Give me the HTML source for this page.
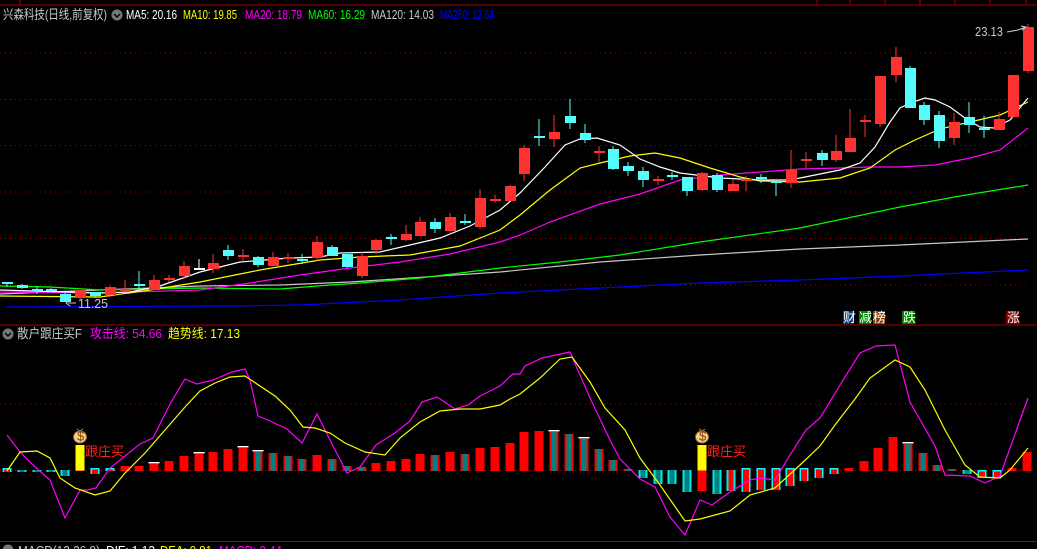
<!DOCTYPE html><html><head><meta charset="utf-8"><style>
html,body{margin:0;padding:0;background:#000;width:1037px;height:549px;overflow:hidden}
svg{display:block}
text{font-family:"Liberation Sans","Noto Sans CJK SC",sans-serif;font-size:13px}
</style></head><body>
<svg id="s" width="1037" height="549" xmlns="http://www.w3.org/2000/svg">
<rect width="1037" height="549" fill="#000"/>
<line x1="0" y1="5" x2="1037" y2="5" stroke="#a00" stroke-width="1"/>
<g stroke="#a00"><line x1="20" y1="0" x2="20" y2="5"/><line x1="817" y1="0" x2="817" y2="5"/><line x1="850" y1="0" x2="850" y2="5"/><line x1="885" y1="0" x2="885" y2="5"/><line x1="920" y1="0" x2="920" y2="5"/><line x1="955" y1="0" x2="955" y2="5"/><line x1="990" y1="0" x2="990" y2="5"/><line x1="1026" y1="0" x2="1026" y2="5"/></g>
<g stroke="#a00" stroke-dasharray="1,4" stroke-width="1">
<line x1="0" y1="53" x2="1030" y2="53"/><line x1="0" y1="99.5" x2="1030" y2="99.5"/><line x1="0" y1="145.5" x2="1030" y2="145.5"/><line x1="0" y1="192" x2="1030" y2="192"/><line x1="0" y1="238.5" x2="1030" y2="238.5"/><line x1="0" y1="285" x2="1030" y2="285"/>
<line x1="0" y1="404" x2="1030" y2="404"/><line x1="0" y1="470.5" x2="1030" y2="470.5"/>
</g>
<line x1="0" y1="325" x2="1037" y2="325" stroke="#a00"/>
<line x1="0" y1="541.5" x2="1037" y2="541.5" stroke="#a00"/>
<g id="ma" fill="none" stroke-width="1.2"></g>
<g id="cd"></g>
<g id="hist"></g>
<g id="ind" fill="none" stroke-width="1.2"></g>
<text x="3" y="19" fill="#c8c8c8" font-size="14" textLength="104" lengthAdjust="spacingAndGlyphs">兴森科技(日线,前复权)</text>
<circle cx="117" cy="15" r="5.5" fill="#777"/><path d="M114 14l3 3 3-3" stroke="#000" fill="none" stroke-width="1.4"/>
<text x="126" y="19" fill="#fff" textLength="51" lengthAdjust="spacingAndGlyphs">MA5: 20.16</text>
<text x="183" y="19" fill="#ff0" textLength="54" lengthAdjust="spacingAndGlyphs">MA10: 19.85</text>
<text x="245" y="19" fill="#f0f" textLength="57" lengthAdjust="spacingAndGlyphs">MA20: 18.79</text>
<text x="308" y="19" fill="#0f0" textLength="57" lengthAdjust="spacingAndGlyphs">MA60: 16.29</text>
<text x="371" y="19" fill="#c8c8c8" textLength="63" lengthAdjust="spacingAndGlyphs">MA120: 14.03</text>
<text x="440" y="19" fill="#00f" textLength="54" lengthAdjust="spacingAndGlyphs">MA250: 12.64</text>
<text x="975" y="36" fill="#c8c8c8" textLength="28" lengthAdjust="spacingAndGlyphs">23.13</text>
<path d="M1007 32 L1018 30 L1026 27" stroke="#c8c8c8" fill="none"/><path d="M1021 26l5 1-4 3" stroke="#c8c8c8" fill="none"/>
<text x="78" y="308" fill="#c8c8c8" textLength="30" lengthAdjust="spacingAndGlyphs">11.25</text>
<path d="M76 303 L68 303 M70 300 L66 303 L70 306" stroke="#c8c8c8" fill="none"/>
<rect x="843" y="311" width="11" height="13" fill="#004080"/><text x="843" y="322" fill="#fff" font-size="11">财</text>
<rect x="859" y="311" width="12" height="13" fill="#008000"/><text x="859" y="322" fill="#fff" font-size="11">减</text>
<rect x="873" y="311" width="12" height="13" fill="#804000"/><text x="873" y="322" fill="#fff" font-size="11">榜</text>
<rect x="902" y="311" width="13" height="13" fill="#008000"/><text x="903" y="322" fill="#fff" font-size="11">跌</text>
<rect x="1006" y="311" width="13" height="13" fill="#800000"/><text x="1007" y="322" fill="#fff" font-size="11">涨</text>
<circle cx="8" cy="334" r="5.5" fill="#777"/><path d="M5 333l3 3 3-3" stroke="#000" fill="none" stroke-width="1.4"/>
<text x="17" y="338" fill="#c8c8c8" textLength="65" lengthAdjust="spacingAndGlyphs">散户跟庄买F</text>
<text x="90" y="338" fill="#f0f" textLength="72" lengthAdjust="spacingAndGlyphs">攻击线: 54.66</text>
<text x="168" y="338" fill="#ff0" textLength="72" lengthAdjust="spacingAndGlyphs">趋势线: 17.13</text>
<text x="18" y="555" fill="#c8c8c8" textLength="82" lengthAdjust="spacingAndGlyphs">MACD(12,26,9)</text>
<text x="106" y="555" fill="#fff" textLength="49" lengthAdjust="spacingAndGlyphs">DIF: 1.12</text>
<text x="160" y="555" fill="#ff0" textLength="52" lengthAdjust="spacingAndGlyphs">DEA: 0.81</text>
<text x="219" y="555" fill="#f0f" textLength="63" lengthAdjust="spacingAndGlyphs">MACD: 0.44</text>
<circle cx="8" cy="550" r="5.5" fill="#777"/>
</svg>
<script>
var NS="http://www.w3.org/2000/svg";
function el(p,t,a){var e=document.createElementNS(NS,t);for(var k in a)e.setAttribute(k,a[k]);document.getElementById(p).appendChild(e);return e;}
function pl(p,col,pts){el(p,"polyline",{points:pts.map(function(q){return q.join(",")}).join(" "),stroke:col});}
pl("ma","#0000ff",[[6,307],[230,306],[300,305],[400,300],[500,293],[600,288],[700,283],[800,280],[900,276],[1028,270]]);
pl("ma","#c8c8c8",[[0,294],[200,286],[280,285],[350,282],[500,272],[600,262],[700,255],[800,249],[900,245],[1028,239]]);
pl("ma","#00ff00",[[0,286],[50,287],[100,290],[200,288],[280,289],[330,285],[360,283],[420,278],[500,268],[560,262],[620,255],[700,242],[800,228],[900,207],[960,196],[1028,185]]);
pl("ma","#ff00ff",[[0,292],[100,293],[200,290],[250,283],[300,275],[350,268],[400,262],[450,254],[500,242],[520,235],[550,222],[600,204],[640,194],[680,180],[720,175],[760,172],[800,169],[840,168],[870,167],[900,167],[935,165],[970,158],[1000,150],[1028,128]]);
pl("ma","#ffff00",[[0,296],[100,297],[150,290],[200,282],[260,270],[320,260],[360,257],[410,255],[460,246],[500,230],[520,215],[550,190],[580,168],[600,163],[630,156],[655,153],[680,158],[710,168],[740,177],[760,181],[800,182],[840,178],[870,168],[895,150],[915,140],[940,129],[970,122],[1000,115],[1028,102]]);
pl("ma","#ffffff",[[0,290],[100,293],[130,292],[160,286],[200,272],[240,262],[290,258],[320,257],[340,253],[380,252],[410,245],[440,238],[470,226],[500,210],[520,193],[545,167],[565,145],[580,139],[597,138],[620,145],[640,159],[660,167],[680,173],[720,178],[760,180],[790,180],[810,176],[840,170],[860,163],[875,147],[890,122],[900,108],[910,103],[925,98],[935,100],[950,107],[965,118],[980,127],[994,128],[1010,120],[1028,98]]);
var C={r:"#ff3232",c:"#54fcfc",w:"#ffffff"};
var cd=[[7,"c",283,284,282,287],[22,"c",285,288,284,289],[37,"c",290,290,286,294],[51,"c",290,290,288,292],[65,"c",294,302,292,302],[80,"r",290,298,290,300],[95,"c",292,296,292,298],[110,"r",287,295,286,297],[125,"r",290,290,280,290],[139,"c",285,285,271,290],[154,"r",280,290,275,290],[169,"r",278,280,275,282],[184,"r",266,276,261,279],[199,"w",269,269,259,270],[213,"r",263,269,254,273],[228,"c",250,256,245,260],[243,"r",255,257,249,262],[258,"c",257,265,256,267],[273,"r",257,266,252,266],[288,"r",258,258,253,263],[302,"c",260,260,254,264],[317,"r",242,258,236,261],[332,"c",247,256,245,256],[347,"c",254,267,254,268],[362,"r",256,276,252,278],[376,"r",240,250,239,254],[391,"c",238,238,234,245],[406,"r",234,240,225,241],[420,"r",222,236,217,236],[435,"c",222,229,218,233],[450,"r",217,231,213,234],[465,"c",222,222,214,225],[480,"r",198,227,189,229],[495,"r",199,201,195,203],[510,"r",186,201,185,201],
[524,"r",148,174,145,181],[539,"c",136,138,119,146],[554,"r",132,139,115,147],[570,"c",116,123,99,129],[585,"c",133,140,124,143],[599,"r",152,152,146,162],[613,"c",149,169,146,170],[628,"c",166,171,162,176],[643,"c",171,180,167,187],[658,"r",180,180,176,185],[672,"c",176,176,172,180],[687,"c",177,191,177,196],[702,"r",173,190,172,191],[717,"c",175,190,173,192],[733,"r",184,191,180,191],[746,"r",180,180,176,191],[761,"c",178,178,174,183],[776,"c",182,182,182,196],[791,"r",170,183,150,188],[806,"r",160,160,152,168],[822,"c",153,160,150,166],[836,"r",151,160,135,162],[850,"r",138,152,109,152],[865,"r",121,121,115,137],[880,"r",76,124,76,127],[896,"r",57,75,47,82],[910,"c",68,108,66,108],[924,"c",105,120,102,125],[939,"c",115,141,111,148],[954,"r",122,138,113,145],[969,"c",117,125,102,133],[984,"c",129,129,116,138],[999,"r",119,130,112,130],[1013,"r",75,117,75,118],[1028,"r",27,71,24,73]];
cd.forEach(function(d){var x=d[0],c=C[d[1]];
el("cd","line",{x1:x,y1:d[4],x2:x,y2:d[5],stroke:c,"stroke-width":1});
var h=d[3]-d[2];if(h<2){el("cd","rect",{x:x-5,y:d[2]-1,width:11,height:2,fill:c});}
else el("cd","rect",{x:x-5,y:d[2],width:11,height:h,fill:c});});
var B=470.5;
var hs=[[7,"o",468,472],[22,"c",470,472],[37,"c",470,472],[51,"c",470,472],[65,"c",470,476],[80,"y",445,471],[95,"o",468,474],[110,"o",468,471],[125,"r",466,471],[139,"r",466,471],[154,"r",464,471,1],[169,"r",461,471],[184,"r",456,471],[199,"r",454,471,1],[213,"r",452,471],[228,"r",449,471],[243,"r",448,471,1],[258,"t",452,471,1],[273,"t",453,471],[288,"t",456,471],[302,"t",459,471],[317,"r",455,471],[332,"t",459,471],[347,"t",466,471],[362,"t",467,471],[376,"r",463,471],[391,"r",461,471],[406,"r",459,471],[420,"r",454,471],[435,"t",455,471],[450,"r",452,471],[465,"t",454,471],[480,"r",448,471],[495,"r",447,471],[510,"r",443,471],
[524,"r",432,471],[539,"r",431,471],[554,"t",432,471,1],[569,"t",434,471],[584,"t",439,471,1],[599,"t",449,471],[613,"t",460,471],[628,"t",469,471],[643,"c",470,478],[658,"c",470,484],[672,"c",470,484],[687,"c",470,492],[702,"y",445,491],[717,"c",470,494],[731,"cr",470,491],[746,"o",468,492],[761,"o",468,490],[776,"o",468,490],[790,"o",468,486],[804,"o",468,481],[819,"o",468,478],[834,"o",468,474],[849,"r",468,471],[864,"r",461,471],[878,"r",448,471],[893,"r",437,471],[908,"t",444,471,1],[923,"t",453,471],[937,"t",465,471],[952,"t",469,471],[967,"c",470,474],[982,"o",470,478],[997,"o",470,478],[1012,"r",468,471],[1027,"r",452,471]];
hs.forEach(function(d){var x=d[0]-4.5,w=9,t=d[2],b=d[3],h=b-t;
if(d[1]=="r")el("hist","rect",{x:x,y:t,width:w,height:h,fill:"#ff0000"});
else if(d[1]=="t"){el("hist","rect",{x:x,y:t,width:w,height:h,fill:"#ff0000"});el("hist","rect",{x:x+2,y:t,width:w-4,height:h,fill:"#008080"});}
else if(d[1]=="c"){el("hist","rect",{x:x,y:t,width:w,height:h,fill:"#00e8e8"});el("hist","rect",{x:x+2,y:t,width:w-4,height:h,fill:"#008080"});}
else if(d[1]=="cr"){el("hist","rect",{x:x,y:t,width:w,height:h,fill:"#00e8e8"});el("hist","rect",{x:x+2,y:t,width:w-4,height:h,fill:"#ff0000"});}
else if(d[1]=="o"){el("hist","rect",{x:x,y:t,width:w,height:h,fill:"#00ffff"});el("hist","rect",{x:x+1.5,y:t+1.5,width:w-3,height:h-1.5,fill:"#ff0000"});}
else if(d[1]=="y"){el("hist","rect",{x:x,y:t,width:w,height:B-t,fill:"#ffff00"});el("hist","rect",{x:x,y:B,width:w,height:b-B,fill:"#ff0000"});
el("hist","path",{d:"M"+(d[0]-3)+" "+(t-16)+"l3 2 3-2",stroke:"#c08030",fill:"none"});
el("hist","ellipse",{cx:d[0],cy:t-8,rx:6.5,ry:6,fill:"#f0d090",stroke:"#a06020"});
var tx=el("hist","text",{x:d[0]-3,y:t-4.5,fill:"#804000","font-size":"9"});tx.textContent="$";
var t2=el("hist","text",{x:d[0]+5,y:t+11,fill:"#ff2020","font-size":"13"});t2.textContent="跟庄买";}
if(d[4])el("hist","rect",{x:x-1,y:t-2,width:w+2,height:1.5,fill:"#fff"});});
pl("ind","#ff00ff",[[7,435],[20,452],[33,465],[50,480],[65,518],[80,490],[87,490],[96,488],[110,468],[140,444],[153,438],[170,404],[185,379],[197,384],[213,380],[232,372],[245,369],[250,380],[258,416],[270,421],[287,429],[302,443],[317,414],[330,440],[347,473],[360,467],[376,445],[395,433],[410,421],[422,402],[437,397],[455,409],[468,405],[480,396],[500,386],[513,374],[520,374],[525,366],[542,358],[570,352],[590,398],[610,440],[620,459],[640,479],[655,487],[670,517],[685,535],[700,500],[712,505],[730,492],[750,480],[760,478],[775,480],[790,455],[806,430],[820,418],[840,385],[860,353],[876,346],[895,345],[910,402],[935,446],[945,475],[970,476],[985,483],[1000,476],[1028,398]]);
pl("ind","#ffff00",[[7,471],[20,452],[37,451],[50,458],[60,478],[75,488],[95,495],[110,491],[125,473],[145,453],[165,430],[185,407],[200,391],[215,383],[230,377],[245,376],[260,386],[275,396],[290,410],[303,427],[315,428],[330,433],[345,443],[365,452],[385,455],[400,438],[420,422],[440,411],[460,409],[480,409],[500,405],[510,399],[520,394],[540,378],[560,359],[572,357],[590,382],[605,408],[625,430],[640,458],[660,485],[685,521],[700,519],[730,511],[750,495],[775,488],[800,465],[820,446],[835,425],[855,399],[870,378],[895,360],[910,367],[925,390],[945,430],[965,465],[980,477],[1000,478],[1010,470],[1028,448]]);
</script>
</body></html>
